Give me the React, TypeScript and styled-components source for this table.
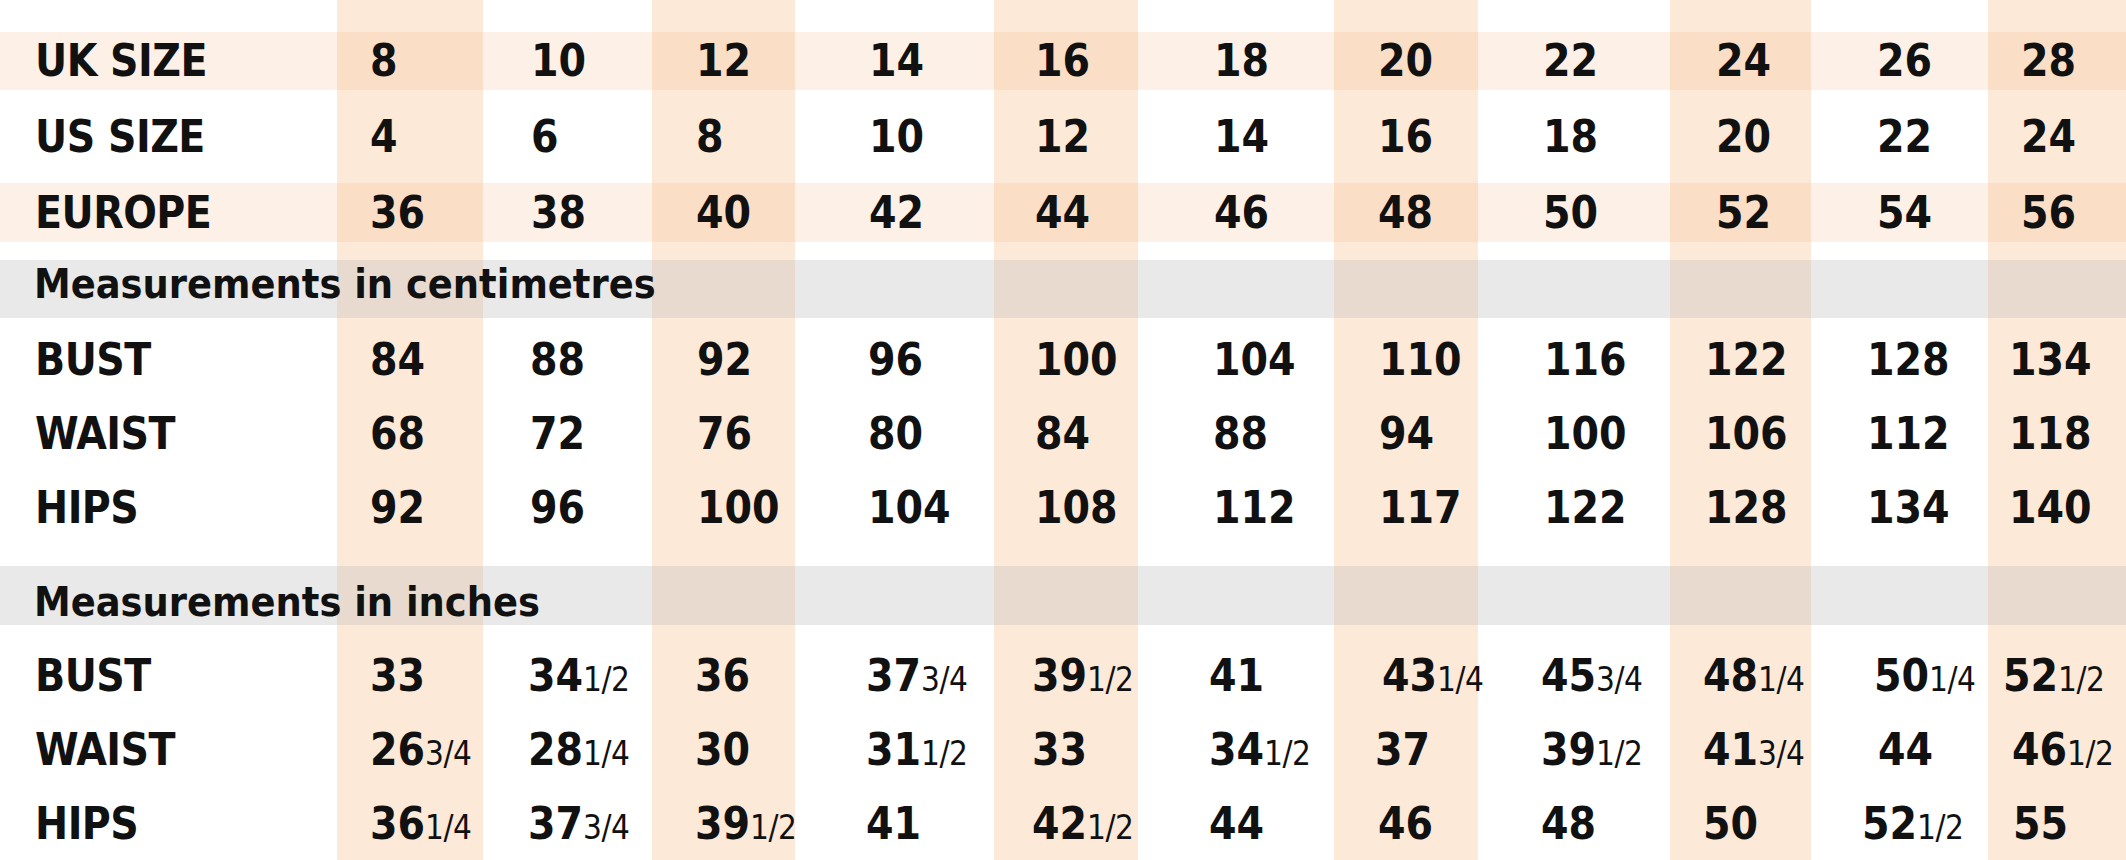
import React from 'react';
import styled, { createGlobalStyle } from 'styled-components';

// column widths of the size grid (label column first)
const COLS = [337, 146, 169, 143, 199, 144, 196, 144, 192, 141, 177, 138];
const STARTS = COLS.reduce<number[]>((acc, w, i) => {
  acc.push(i === 0 ? 0 : acc[i - 1] + COLS[i - 1]);
  return acc;
}, []);
const BEARING = 3;

const STRIPE = '#fde9d7';
const stripeGradient = (() => {
  const stops: string[] = [];
  STARTS.forEach((x, i) => {
    const end = x + COLS[i];
    const c = i % 2 === 1 ? STRIPE : '#ffffff';
    stops.push(`${c} ${x}px ${end}px`);
  });
  return `linear-gradient(to right, ${stops.join(', ')})`;
})();

const GlobalStyle = createGlobalStyle`
  html, body { margin: 0; padding: 0; background: #fff; }
  body {
    font-family: "DejaVu Sans Condensed", "DejaVu Sans", sans-serif;
    font-stretch: condensed;
    color: #111;
  }
`;

const Sheet = styled.div`
  width: 2126px;
  height: 860px;
  overflow: hidden;
  background: ${stripeGradient};
  display: flex;
  flex-direction: column;
`;

const Gap = styled.div<{ $h: number }>`
  height: ${({ $h }) => $h}px;
  flex: none;
`;

type Band = 'peach' | 'grey';

const Row = styled.div<{ $h: number; $band?: Band }>`
  flex: none;
  height: ${({ $h }) => $h}px;
  display: grid;
  grid-template-columns: ${COLS.map((w) => `${w}px`).join(' ')};
  align-items: center;
  background: ${({ $band }) =>
    $band === 'peach'
      ? 'rgba(245, 180, 130, 0.2)'
      : $band === 'grey'
      ? 'rgba(192, 192, 192, 0.35)'
      : 'transparent'};
`;

const Cell = styled.div<{ $pad: number }>`
  padding-left: ${({ $pad }) => $pad}px;
  font-size: 44px;
  font-weight: 700;
  line-height: 1;
  white-space: nowrap;
`;

const Label = styled(Cell)`
  letter-spacing: -0.5px;
`;

const Frac = styled.span`
  font-size: 33px;
  font-weight: 400;
  letter-spacing: -0.5px;
`;

const Header = styled.div<{ $h: number; $top?: number; $bottom?: number }>`
  flex: none;
  height: ${({ $h }) => $h}px;
  box-sizing: border-box;
  padding: ${({ $top = 0, $bottom = 0 }) => `${$top}px 0 ${$bottom}px 34px`};
  display: flex;
  align-items: center;
  background: rgba(192, 192, 192, 0.35);
  font-size: 41px;
  font-weight: 700;
  white-space: nowrap;
`;

type SizeRow = { label: string; values: string[]; lefts: number[]; band?: Band; h: number };

const SIZE_LEFTS = [38, 373, 534, 699, 872, 1038, 1217, 1381, 1546, 1719, 1880, 2024];
const CM_LEFTS = [38, 373, 533, 700, 871, 1038, 1216, 1382, 1547, 1708, 1870, 2012];
const IN_BASE = [38, 373, 531, 698, 869, 1035, 1212, 1381, 1544, 1706];

const sizes: SizeRow[] = [
  { label: 'UK SIZE', band: 'peach', h: 58, lefts: SIZE_LEFTS,
    values: ['8', '10', '12', '14', '16', '18', '20', '22', '24', '26', '28'] },
  { label: 'US SIZE', h: 93, lefts: SIZE_LEFTS,
    values: ['4', '6', '8', '10', '12', '14', '16', '18', '20', '22', '24'] },
  { label: 'EUROPE', band: 'peach', h: 59, lefts: SIZE_LEFTS,
    values: ['36', '38', '40', '42', '44', '46', '48', '50', '52', '54', '56'] },
];

const cm: SizeRow[] = [
  { label: 'BUST', h: 74, lefts: CM_LEFTS,
    values: ['84', '88', '92', '96', '100', '104', '110', '116', '122', '128', '134'] },
  { label: 'WAIST', h: 74, lefts: CM_LEFTS,
    values: ['68', '72', '76', '80', '84', '88', '94', '100', '106', '112', '118'] },
  { label: 'HIPS', h: 74, lefts: CM_LEFTS,
    values: ['92', '96', '100', '104', '108', '112', '117', '122', '128', '134', '140'] },
];

const inches: SizeRow[] = [
  { label: 'BUST', h: 74, lefts: [...IN_BASE.slice(0, 7), 1385, 1544, 1706, 1877, 2006],
    values: ['33', '34 1/2', '36', '37 3/4', '39 1/2', '41', '43 1/4', '45 3/4', '48 1/4', '50 1/4', '52 1/2'] },
  { label: 'WAIST', h: 74, lefts: [...IN_BASE.slice(0, 7), 1378, 1544, 1706, 1881, 2015],
    values: ['26 3/4', '28 1/4', '30', '31 1/2', '33', '34 1/2', '37', '39 1/2', '41 3/4', '44', '46 1/2'] },
  { label: 'HIPS', h: 73, lefts: [...IN_BASE.slice(0, 7), 1381, 1544, 1706, 1865, 2016],
    values: ['36 1/4', '37 3/4', '39 1/2', '41', '42 1/2', '44', '46', '48', '50', '52 1/2', '55'] },
];

function Value({ text }: { text: string }) {
  const [whole, frac] = text.split(' ');
  return (
    <>
      {whole}
      {frac && <Frac>{frac}</Frac>}
    </>
  );
}

function TableRow({ row }: { row: SizeRow }) {
  const pad = (i: number) => row.lefts[i] - STARTS[i] - BEARING;
  return (
    <Row $h={row.h} $band={row.band}>
      <Label $pad={pad(0)}>{row.label}</Label>
      {row.values.map((v, i) => (
        <Cell key={i} $pad={pad(i + 1)}>
          <Value text={v} />
        </Cell>
      ))}
    </Row>
  );
}

export default function App() {
  return (
    <>
      <GlobalStyle />
      <Sheet>
        <Gap $h={32} />
        {sizes.map((r) => <TableRow key={r.label} row={r} />)}
        <Gap $h={18} />
        <Header $h={58} $bottom={10}>Measurements in centimetres</Header>
        <Gap $h={5} />
        {cm.map((r) => <TableRow key={r.label} row={r} />)}
        <Gap $h={21} />
        <Header $h={59} $top={12}>Measurements in inches</Header>
        <Gap $h={14} />
        {inches.map((r) => <TableRow key={r.label} row={r} />)}
      </Sheet>
    </>
  );
}
